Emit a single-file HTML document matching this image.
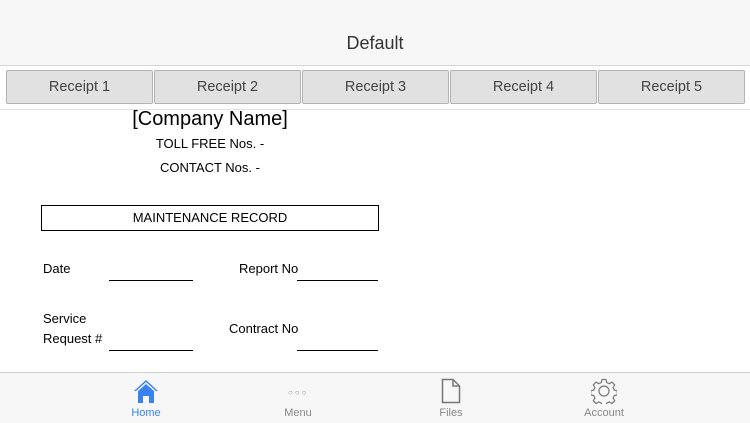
<!DOCTYPE html>
<html><head><style>
body{margin:0;width:750px;height:422px;overflow:hidden;background:#fff;font-family:"Liberation Sans",sans-serif;position:relative}
.hdr{position:absolute;left:0;top:0;width:750px;height:65px;background:#f7f7f7;border-bottom:1px solid #d6d6d6}
.hdr div{position:absolute;top:33px;width:750px;text-align:center;font-size:18px;color:#333}
.row{position:absolute;top:66px;left:0;width:750px;height:43px;border-bottom:1px solid #e2e2e2;background:#fff}
.b{position:absolute;top:4px;height:32px;width:145px;background:#e1e1e1;border:1px solid #b3b3b3;border-radius:2px;text-align:center;line-height:33px;font-size:14.5px;color:#444}
.t{position:absolute;color:#000;font-size:13px}
.ln{position:absolute;height:1px;background:#000}
.tab{position:absolute;top:372px;left:0;width:750px;height:50px;background:#f7f7f7;border-top:1px solid #cfcfcf}
.tl{position:absolute;top:34px;font-size:11px;color:#888;width:80px;text-align:center}
</style></head><body>
<div class="hdr"><div>Default</div></div>
<div class="row">
<div class="b" style="left:6px">Receipt 1</div>
<div class="b" style="left:154px">Receipt 2</div>
<div class="b" style="left:302px">Receipt 3</div>
<div class="b" style="left:450px">Receipt 4</div>
<div class="b" style="left:598px">Receipt 5</div>
</div>
<div class="t" style="left:110px;width:200px;text-align:center;top:108px;font-size:20px">[Company Name]</div>
<div class="t" style="left:110px;width:200px;text-align:center;top:136px">TOLL FREE Nos. -</div>
<div class="t" style="left:110px;width:200px;text-align:center;top:160px">CONTACT Nos. -</div>
<div style="position:absolute;left:41px;top:205px;width:336px;height:24px;border:1px solid #000;text-align:center;line-height:24px;font-size:13px">MAINTENANCE RECORD</div>
<div class="t" style="left:43px;top:261px">Date</div>
<div class="ln" style="left:109px;top:280px;width:84px"></div>
<div class="t" style="left:239px;top:261px">Report No</div>
<div class="ln" style="left:297px;top:280px;width:81px"></div>
<div class="t" style="left:43px;top:311px">Service</div>
<div class="t" style="left:43px;top:331px">Request #</div>
<div class="ln" style="left:109px;top:350px;width:84px"></div>
<div class="t" style="left:229px;top:321px">Contract No</div>
<div class="ln" style="left:297px;top:350px;width:81px"></div>
<div class="tab">
<svg style="position:absolute;left:133px;top:5px" width="26" height="26" viewBox="0 0 26 26"><path d="M13 2 L1 13 L3 13 L13 4 L23 13 L25 13Z" fill="#3b82f0"/><path d="M5 13 L13 6 L21 13 V25 H16 V18 H10 V25 H5Z" fill="#3b82f0"/></svg>
<div class="tl" style="left:106px;color:#3b82f0">Home</div>
<div style="position:absolute;left:288px;top:15px;font-size:8px;color:#888;letter-spacing:2px">○○○</div>
<div class="tl" style="left:258px">Menu</div>
<svg style="position:absolute;left:441px;top:5px" width="20" height="26" viewBox="0 0 20 26"><path d="M1.5 1.5 H12 L18.5 8 V24.5 H1.5Z M12 1.5 V8 H18.5" fill="none" stroke="#777" stroke-width="1.5"/></svg>
<div class="tl" style="left:411px">Files</div>
<svg style="position:absolute;left:591px;top:5px" width="26" height="26" viewBox="0 0 26 26"><circle cx="13" cy="13" r="5" fill="none" stroke="#777" stroke-width="1.2"/><path d="M11 1.5h4l.7 3 2.5 1.2 2.7-1.6 2.8 2.8-1.6 2.7 1.2 2.5 3 .7v4l-3 .7-1.2 2.5 1.6 2.7-2.8 2.8-2.7-1.6-2.5 1.2-.7 3h-4l-.7-3-2.5-1.200-2.7 1.6-2.8-2.8 1.6-2.7-1.2-2.5-3-.7v-4l3-.7 1.2-2.5-1.6-2.7 2.8-2.8 2.7 1.6 2.5-1.2z" fill="none" stroke="#777" stroke-width="1.2"/></svg>
<div class="tl" style="left:564px">Account</div>
</div>
</body></html>
